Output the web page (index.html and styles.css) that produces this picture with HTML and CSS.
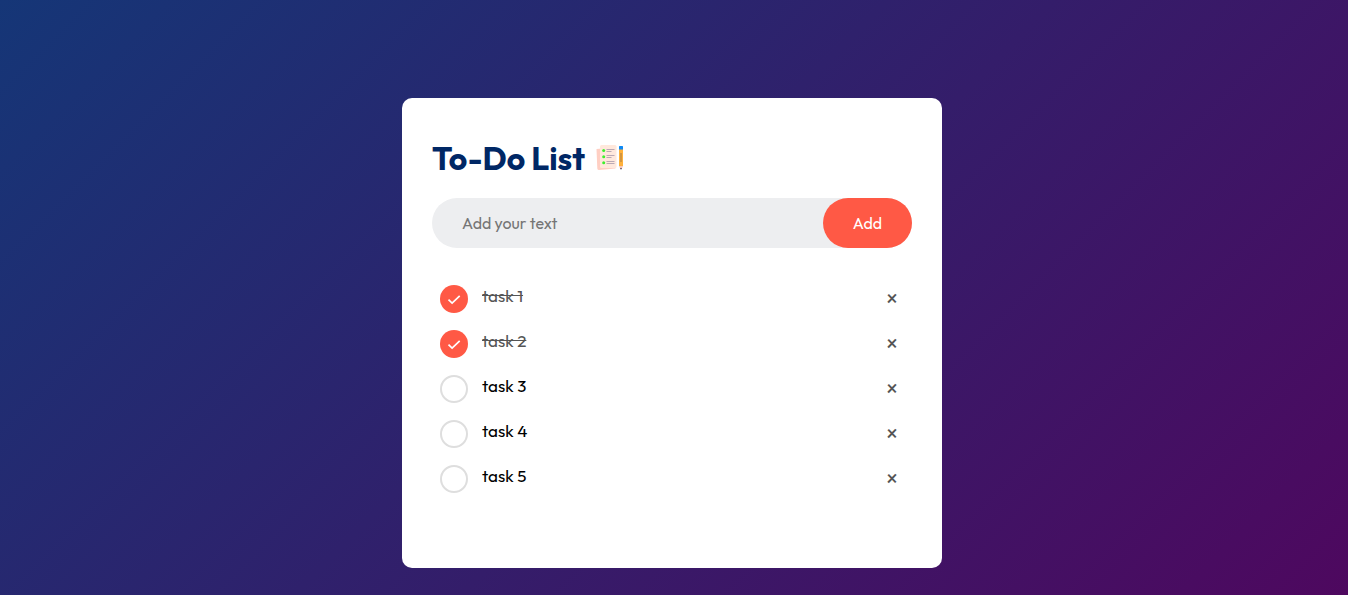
FILE: index.html
```html
<!DOCTYPE html>
<html lang="en">
<head>
<meta charset="utf-8">
<title>To-Do List</title>
<link rel="stylesheet" href="styles.css">
</head>
<body>
<main class="container">
  <section class="todo-app">
    <h1 class="title"><span class="title-text">To-Do List</span>
      <svg class="title-icon" viewBox="0 0 30 30" aria-hidden="true">
        <path d="M1.500 6 L19 4.500 20.500 25.500 4 27 Q2.500 27 2.300 25.500Z" fill="#ffcfc3"/>
        <rect x="5" y="2" width="16.500" height="23" rx="1.500" fill="#ffe8dc"/>
        <g fill="#3df02f"><circle cx="8.700" cy="7.500" r="1.500"/><circle cx="8.700" cy="13.700" r="1.500"/><circle cx="8.700" cy="19.700" r="1.500"/></g>
        <path d="M11.500 6.500h8M11.500 8.500h5M11.500 12.500h8M11.500 14.500h5M11.500 18.500h8M11.500 20.500h8" stroke="#bba9b4" stroke-width="1"/>
        <path d="M24 23h4l-1.300 3h-1.400z" fill="#f7c6b8"/>
        <rect x="24" y="6" width="4" height="17" fill="#ffb13b"/>
        <path d="M26 10v9" stroke="#a77b45" stroke-width="1"/>
        <rect x="24" y="3" width="4" height="3.500" rx=".5" fill="#0c88f5"/>
        <path d="M25.200 25h1.600l-.8 2z" fill="#343044"/>
      </svg>
    </h1>
    <form class="row">
      <input class="task-input" type="text" placeholder="Add your text" aria-label="Add your text">
      <button class="add-button" type="button">Add</button>
    </form>
    <ul class="tasks">
      <li class="task done"><svg class="mark" viewBox="0 0 28 28"><circle class="disc" cx="14" cy="14" r="14"/><path class="check" d="M8.500 14.700l3.600 3.400 7.600-7.200"/></svg><span class="label">task 1</span><span class="remove">×</span></li>
      <li class="task done"><svg class="mark" viewBox="0 0 28 28"><circle class="disc" cx="14" cy="14" r="14"/><path class="check" d="M8.500 14.700l3.600 3.400 7.600-7.200"/></svg><span class="label">task 2</span><span class="remove">×</span></li>
      <li class="task"><svg class="mark" viewBox="0 0 28 28"><circle class="ring" cx="14" cy="14" r="13"/></svg><span class="label">task 3</span><span class="remove">×</span></li>
      <li class="task"><svg class="mark" viewBox="0 0 28 28"><circle class="ring" cx="14" cy="14" r="13"/></svg><span class="label">task 4</span><span class="remove">×</span></li>
      <li class="task"><svg class="mark" viewBox="0 0 28 28"><circle class="ring" cx="14" cy="14" r="13"/></svg><span class="label">task 5</span><span class="remove">×</span></li>
    </ul>
  </section>
</main>
</body>
</html>
```
FILE: styles.css
```css
* {
  margin: 0;
  padding: 0;
  box-sizing: border-box;
  font-family: Outfit, Lato, sans-serif;
}

.container {
  height: 100vh;
  padding: 98px 4px 0 0;
  background: linear-gradient(135deg, #153677, #4e085f);
  overflow: hidden;
}

.todo-app {
  width: 540px;
  height: 470px;
  margin: 0 auto;
  padding: 40px 30px 0;
  background: #fff;
  border-radius: 10px;
}

.title {
  display: flex;
  align-items: center;
  height: 40px;
  margin-bottom: 20px;
  color: #002765;
  font-size: 32px;
  line-height: 40px;
}

.title-text {
  width: 163px;
  white-space: nowrap;
}

.title-icon {
  width: 30px;
  height: 30px;
}

.row {
  display: flex;
  height: 50px;
  margin-bottom: 25px;
  background: #edeef0;
  border-radius: 30px;
}

.task-input {
  flex: 1;
  min-width: 0;
  padding: 0 30px;
  border: 0;
  outline: 0;
  background: transparent;
  font-size: 16px;
}

.task-input::placeholder {
  color: #757575;
}

.add-button {
  width: 89px;
  border: 0;
  border-radius: 40px;
  background: #ff5945;
  color: #fff;
  font-size: 16px;
  font-weight: 450;
}

.tasks {
  list-style: none;
}

.task {
  display: flex;
  align-items: flex-start;
  height: 45px;
  padding: 12px 0 0 8px;
}

.mark {
  width: 28px;
  height: 28px;
  margin-right: 14px;
}

.disc {
  fill: #ff5945;
}

.check {
  fill: none;
  stroke: #fff;
  stroke-width: 1.7;
}

.ring {
  fill: none;
  stroke: #dedede;
  stroke-width: 2;
}

.label {
  flex: 1;
  font-size: 17px;
  line-height: 22px;
}

.done .label {
  color: #555;
  text-decoration: line-through;
}

.remove {
  width: 40px;
  color: #555;
  font-size: 22px;
  line-height: 26px;
  text-align: center;
}
```
